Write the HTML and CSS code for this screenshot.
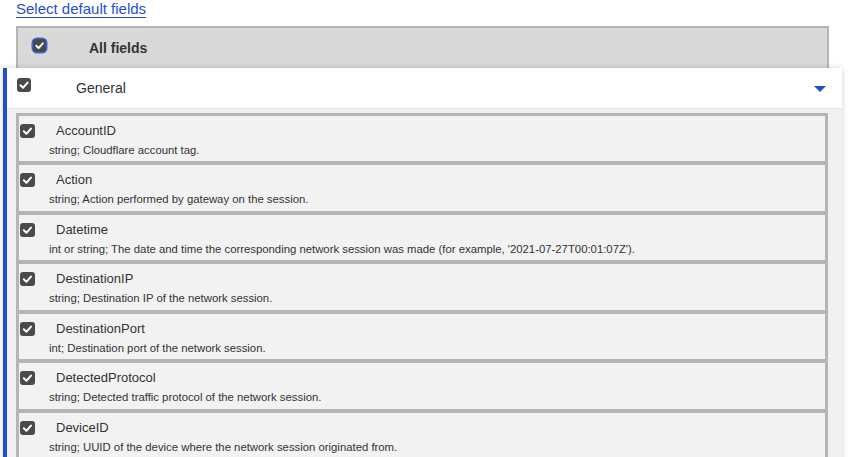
FILE: index.html
```html
<!DOCTYPE html>
<html>
<head>
<meta charset="utf-8">
<link rel="stylesheet" href="styles.css">
</head>
<body>
<div class="wrap">
  <a class="link" href="#">Select default fields</a>
  <div class="all-box">
    <span class="cb cb-focus"><svg width="13" height="13" viewBox="0 0 14 14"><rect x="0" y="0" width="14" height="14" rx="3" fill="#4a4a4a"/><path d="M3.5 7.3 L6 9.8 L10.6 4.6" fill="none" stroke="#fff" stroke-width="2" stroke-linecap="round" stroke-linejoin="round"/></svg></span>
    <span class="all-label">All fields</span>
  </div>
  <div class="panel">
    <div class="panel-head">
      <span class="cb cb-head"><svg width="14" height="14" viewBox="0 0 14 14"><rect x="0" y="0" width="14" height="14" rx="3" fill="#4a4a4a"/><path d="M3.5 7.3 L6 9.8 L10.6 4.6" fill="none" stroke="#fff" stroke-width="2" stroke-linecap="round" stroke-linejoin="round"/></svg></span>
      <span class="head-label">General</span>
      <span class="caret"></span>
    </div>
    <div class="panel-body">
      <div class="item">
        <div class="item-row"><span class="cb"><svg width="15" height="14" viewBox="0 0 15 14"><rect x="0" y="0" width="15" height="14" rx="3" fill="#4a4a4a"/><path d="M3.8 7.3 L6.4 9.8 L11 4.6" fill="none" stroke="#fff" stroke-width="2" stroke-linecap="round" stroke-linejoin="round"/></svg></span><span class="item-label">AccountID</span></div>
        <div class="item-desc">string; Cloudflare account tag.</div>
      </div>
      <div class="item">
        <div class="item-row"><span class="cb"><svg width="15" height="14" viewBox="0 0 15 14"><rect x="0" y="0" width="15" height="14" rx="3" fill="#4a4a4a"/><path d="M3.8 7.3 L6.4 9.8 L11 4.6" fill="none" stroke="#fff" stroke-width="2" stroke-linecap="round" stroke-linejoin="round"/></svg></span><span class="item-label">Action</span></div>
        <div class="item-desc">string; Action performed by gateway on the session.</div>
      </div>
      <div class="item">
        <div class="item-row"><span class="cb"><svg width="15" height="14" viewBox="0 0 15 14"><rect x="0" y="0" width="15" height="14" rx="3" fill="#4a4a4a"/><path d="M3.8 7.3 L6.4 9.8 L11 4.6" fill="none" stroke="#fff" stroke-width="2" stroke-linecap="round" stroke-linejoin="round"/></svg></span><span class="item-label">Datetime</span></div>
        <div class="item-desc">int or string; The date and time the corresponding network session was made (for example, '2021-07-27T00:01:07Z').</div>
      </div>
      <div class="item">
        <div class="item-row"><span class="cb"><svg width="15" height="14" viewBox="0 0 15 14"><rect x="0" y="0" width="15" height="14" rx="3" fill="#4a4a4a"/><path d="M3.8 7.3 L6.4 9.8 L11 4.6" fill="none" stroke="#fff" stroke-width="2" stroke-linecap="round" stroke-linejoin="round"/></svg></span><span class="item-label">DestinationIP</span></div>
        <div class="item-desc">string; Destination IP of the network session.</div>
      </div>
      <div class="item">
        <div class="item-row"><span class="cb"><svg width="15" height="14" viewBox="0 0 15 14"><rect x="0" y="0" width="15" height="14" rx="3" fill="#4a4a4a"/><path d="M3.8 7.3 L6.4 9.8 L11 4.6" fill="none" stroke="#fff" stroke-width="2" stroke-linecap="round" stroke-linejoin="round"/></svg></span><span class="item-label">DestinationPort</span></div>
        <div class="item-desc">int; Destination port of the network session.</div>
      </div>
      <div class="item">
        <div class="item-row"><span class="cb"><svg width="15" height="14" viewBox="0 0 15 14"><rect x="0" y="0" width="15" height="14" rx="3" fill="#4a4a4a"/><path d="M3.8 7.3 L6.4 9.8 L11 4.6" fill="none" stroke="#fff" stroke-width="2" stroke-linecap="round" stroke-linejoin="round"/></svg></span><span class="item-label">DetectedProtocol</span></div>
        <div class="item-desc">string; Detected traffic protocol of the network session.</div>
      </div>
      <div class="item">
        <div class="item-row"><span class="cb"><svg width="15" height="14" viewBox="0 0 15 14"><rect x="0" y="0" width="15" height="14" rx="3" fill="#4a4a4a"/><path d="M3.8 7.3 L6.4 9.8 L11 4.6" fill="none" stroke="#fff" stroke-width="2" stroke-linecap="round" stroke-linejoin="round"/></svg></span><span class="item-label">DeviceID</span></div>
        <div class="item-desc">string; UUID of the device where the network session originated from.</div>
      </div>
    </div>
  </div>
</div>
</body>
</html>
```
FILE: styles.css
```css
html, body {
  margin: 0;
  padding: 0;
  background: #fff;
  overflow: hidden;
}
body {
  font-family: "Liberation Sans", Arial, sans-serif;
  color: #333;
}
.wrap {
  padding: 0 24px 0 16px;
}
.link {
  display: inline-block;
  font-size: 15px;
  line-height: 13px;
  height: 14.5px;
  color: #1f4fce;
  text-decoration: none;
  border-bottom: 1px solid #1f4fce;
  margin-bottom: 8px;
}
.all-box {
  display: flex;
  align-items: center;
  height: 40px;
  background: #d9d9d9;
  border: 2px solid #b5b5b5;
  border-bottom: none;
  padding-left: 15px;
}
.cb {
  display: inline-flex;
  flex: none;
}
.cb svg {
  display: block;
}
.cb-focus {
  border-radius: 4px;
  box-shadow: 0 0 0 1.5px #2f6ae8;
  margin-top: -5px;
}
.all-label {
  font-weight: bold;
  font-size: 14px;
  margin-left: 43px;
  color: #333;
}
.panel {
  margin: 0 -13px;
  border-left: 4px solid #1e50c8;
  background: #f1f1f1;
  box-shadow: 0 0 6px rgba(0, 0, 0, 0.18);
  padding-bottom: 20px;
}
.panel-head {
  display: flex;
  align-items: center;
  height: 40px;
  background: #fff;
  border-bottom: 1px solid #e6e6e6;
  padding-left: 10px;
  padding-right: 16px;
}
.cb-head {
  margin-top: -5px;
}
.head-label {
  font-size: 14px;
  margin-left: 45px;
  margin-top: 0;
  color: #333;
  flex: 1;
}
.caret {
  width: 0;
  height: 0;
  border-left: 6px solid transparent;
  border-right: 6px solid transparent;
  border-top: 6px solid #1e50c8;
  margin-top: 2px;
}
.panel-body {
  padding: 4px 14px 0 9px;
}
.item {
  background: #f2f2f2;
  border: 3px solid #b5b5b5;
  border-bottom-width: 1px;
  padding: 7px 0 4.5px 1px;
}
.item:last-child {
  border-bottom-width: 3px;
}
.item-row {
  display: flex;
  align-items: center;
  height: 16px;
}
.item-label {
  font-size: 13px;
  line-height: 16px;
  margin-left: 21px;
  margin-top: 0;
  color: #333;
}
.item-desc {
  font-size: 11.33px;
  line-height: 14px;
  margin-top: 4px;
  padding-left: 29px;
  color: #333;
}
```
